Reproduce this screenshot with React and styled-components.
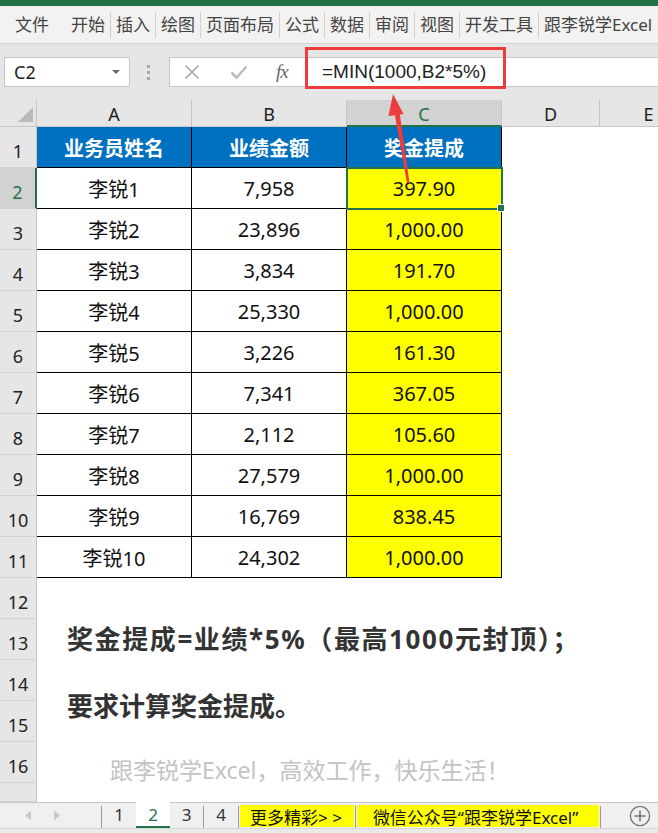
import React from 'react';
import styled, { createGlobalStyle, css } from 'styled-components';

const GREEN = '#217346';
const RED = '#ef3b3b';
const FONT = '"Noto Sans", "Noto Sans CJK SC", sans-serif';

const GlobalStyle = createGlobalStyle`
  html, body { margin: 0; padding: 0; background: #fff; }
  body { font-family: ${FONT}; }
  * { box-sizing: border-box; }
`;

const Window = styled.div`
  position: relative;
  width: 658px;
  height: 833px;
  overflow: hidden;
  display: flex;
  flex-direction: column;
  background: #fff;
`;

const TitleStrip = styled.div`
  flex: none;
  height: 6px;
  background: ${GREEN};
`;

const Ribbon = styled.nav`
  flex: none;
  height: 38px;
  display: flex;
  align-items: center;
  padding-left: 10px;
  background: #f3f2f1;
  border-bottom: 1px solid #d4d4d4;
`;

const RibbonTab = styled.span`
  padding: 0 5px;
  margin-right: ${(p) => p.$gap || 0}px;
  font-size: 17px;
  line-height: 24px;
  color: #444;
  white-space: nowrap;
`;

const RibbonSep = styled.span`
  flex: none;
  width: 1px;
  height: 26px;
  background: #d0d0d0;
`;

const FormulaBand = styled.div`
  flex: none;
  height: 56px;
  display: flex;
  align-items: flex-start;
  padding: 13px 0 0 4px;
  background: #e6e6e6;
`;

const NameBox = styled.div`
  flex: none;
  width: 126px;
  height: 30px;
  display: flex;
  align-items: center;
  justify-content: space-between;
  padding: 0 9px 0 9px;
  background: #fff;
  border: 1px solid #c6c6c6;
  font-size: 18px;
  color: #222;
`;

const Caret = styled.span`
  width: 0;
  height: 0;
  border-left: 4px solid transparent;
  border-right: 4px solid transparent;
  border-top: 4px solid #6a6a6a;
`;

const Grip = styled.div`
  flex: none;
  width: 39px;
  height: 30px;
  display: flex;
  flex-direction: column;
  align-items: center;
  justify-content: center;
  gap: 3px;
  padding-right: 2px;
`;

const GripDot = styled.span`
  width: 3px;
  height: 3px;
  background: #a8a8a8;
`;

const FormulaField = styled.div`
  flex: 1;
  height: 30px;
  display: flex;
  background: #fff;
  border: 1px solid #c6c6c6;
  border-right: none;
`;

const ActionBox = styled.div`
  flex: none;
  width: 136px;
  display: flex;
  align-items: center;
  padding-left: 14px;
  gap: 30px;
  border-right: 1px solid #d4d4d4;
`;

const FxLabel = styled.span`
  font-family: "Liberation Serif", serif;
  font-style: italic;
  font-size: 19px;
  color: #666;
  letter-spacing: -1px;
  margin-left: -2px;
`;

const FormulaText = styled.div`
  position: relative;
  flex: 1;
  display: flex;
  align-items: center;
  padding-left: 16px;
  font-family: "Liberation Sans", Arial, sans-serif;
  font-size: 19px;
  color: #222;
`;

const RedFrame = styled.div`
  position: absolute;
  left: -1px;
  top: -11px;
  width: 201px;
  height: 42px;
  border: 3px solid ${RED};
  pointer-events: none;
`;

const Sheet = styled.div`
  flex: 1;
  min-height: 0;
  overflow: hidden;
  display: grid;
  grid-template-columns: 37px 155px 155px 155px 98px 98px;
  grid-template-rows: 27px repeat(16, 41px) 1fr;
  background: #fff;
`;

const Corner = styled.div`
  position: relative;
  background: #e6e6e6;
  border-right: 1px solid #c6c6c6;
  border-bottom: 1px solid #c6c6c6;
  &::after {
    content: '';
    position: absolute;
    right: 3px;
    bottom: 4px;
    border-style: solid;
    border-width: 0 0 15px 15px;
    border-color: transparent transparent #b9b9b9 transparent;
  }
`;

const ColHeader = styled.div`
  display: flex;
  align-items: center;
  justify-content: center;
  padding-top: 2px;
  font-size: 18px;
  background: ${(p) => (p.$active ? '#d2d2d2' : '#e6e6e6')};
  color: ${(p) => (p.$active ? GREEN : '#222')};
  border-right: 1px solid #c6c6c6;
  border-bottom: ${(p) => (p.$active ? `2px solid ${GREEN}` : '1px solid #c6c6c6')};
`;

const RowHeader = styled.div`
  display: flex;
  align-items: flex-end;
  justify-content: center;
  padding-bottom: 5px;
  font-size: 18px;
  line-height: 22px;
  background: ${(p) => (p.$active ? '#d2d2d2' : '#e6e6e6')};
  color: ${(p) => (p.$active ? GREEN : '#222')};
  border-right: ${(p) => (p.$active ? `2px solid ${GREEN}` : '1px solid #c6c6c6')};
  border-bottom: 1px solid #d2d2d2;
`;

const toneBg = { head: '#0070c0', bonus: '#ffff00', plain: '#fff' };

const Cell = styled.div`
  position: relative;
  display: flex;
  align-items: center;
  justify-content: center;
  white-space: nowrap;
  font-size: 20px;
  background: ${(p) => toneBg[p.$tone]};
  color: ${(p) => (p.$tone === 'head' ? '#fff' : '#111')};
  font-weight: ${(p) => (p.$tone === 'head' ? 700 : 400)};
  border-right: 1px solid #000;
  border-bottom: 1px solid #000;
  ${(p) =>
    p.$selected &&
    css`
      z-index: 2;
      outline: 2px solid ${GREEN};
      outline-offset: -1px;
      &::after {
        content: '';
        position: absolute;
        right: -4px;
        bottom: -4px;
        width: 6px;
        height: 6px;
        background: ${GREEN};
        border: 1px solid #fff;
      }
    `}
`;

const Blank = styled.div`
  grid-column: ${(p) => p.$span || 'auto'};
  background: #fff;
`;

const Note = styled.div`
  grid-column: 2 / span 5;
  display: flex;
  align-items: ${(p) => p.$align};
  padding-left: ${(p) => p.$indent}px;
  white-space: nowrap;
  overflow: visible;
  font-size: ${(p) => p.$size}px;
  font-weight: ${(p) => (p.$muted ? 400 : 700)};
  color: ${(p) => (p.$muted ? '#c3c3c3' : '#333')};
  letter-spacing: ${(p) => p.$track || 0}px;
  line-height: 1.2;
`;

const NoteText = styled.span`
  margin-top: ${(p) => p.$shift || 0}px;
  margin-bottom: ${(p) => p.$drop || 0}px;
`;

const TabBar = styled.div`
  flex: none;
  height: 26px;
  display: flex;
  align-items: stretch;
  background: #f0f0f0;
  border-top: 1px solid #c6c6c6;
`;

const Nav = styled.div`
  flex: none;
  width: 101px;
  display: flex;
  align-items: center;
  padding-left: 24px;
  gap: 21px;
`;

const TabDivider = styled.span`
  flex: none;
  width: 1px;
  margin-top: 3px;
  background: #9a9a9a;
`;

const SheetTab = styled.div`
  flex: none;
  width: ${(p) => p.$w}px;
  display: flex;
  align-items: center;
  justify-content: center;
  font-size: 17px;
  color: ${(p) => (p.$active ? GREEN : '#333')};
  background: ${(p) => (p.$active ? '#fff' : 'transparent')};
  border-bottom: 2px solid ${(p) => (p.$active ? GREEN : 'transparent')};
  margin-top: ${(p) => (p.$active ? '-1px' : '0')};
`;

const PromoTab = styled.div`
  flex: none;
  display: flex;
  align-items: center;
  margin: 2px 1px 1px 1px;
  padding: 0 ${(p) => p.$pad}px 0 ${(p) => p.$padL}px;
  background: #ffff00;
  font-size: 17px;
  color: #111;
  white-space: nowrap;
`;

const Spacer = styled.div`
  flex: 1;
`;

const AddSheet = styled.div`
  flex: none;
  display: flex;
  align-items: center;
  margin-right: 7px;
`;

const BottomStrip = styled.div`
  flex: none;
  height: 5px;
  background: #e9e9e9;
  border-top: 1px solid #d6d6d6;
`;

const Overlay = styled.svg`
  position: absolute;
  left: 0;
  top: 0;
  pointer-events: none;
  z-index: 10;
`;

const ribbonTabs = ['开始', '插入', '绘图', '页面布局', '公式', '数据', '审阅', '视图', '开发工具', '跟李锐学Excel'];

const rows = [
  ['李锐1', '7,958', '397.90'],
  ['李锐2', '23,896', '1,000.00'],
  ['李锐3', '3,834', '191.70'],
  ['李锐4', '25,330', '1,000.00'],
  ['李锐5', '3,226', '161.30'],
  ['李锐6', '7,341', '367.05'],
  ['李锐7', '2,112', '105.60'],
  ['李锐8', '27,579', '1,000.00'],
  ['李锐9', '16,769', '838.45'],
  ['李锐10', '24,302', '1,000.00'],
];

const Tri = ({ dir }) => (
  <svg width="8" height="11" viewBox="0 0 8 11">
    {dir === 'left' ? (
      <polygon points="7,0.5 7,10.5 1,5.5" fill="#c9c9c9" />
    ) : (
      <polygon points="1,0.5 1,10.5 7,5.5" fill="#c9c9c9" />
    )}
  </svg>
);

export default function App() {
  return (
    <Window>
      <GlobalStyle />
      <TitleStrip />
      <Ribbon>
        <RibbonTab $gap={12}>文件</RibbonTab>
        {ribbonTabs.map((t, i) => (
          <React.Fragment key={t}>
            {i > 0 && <RibbonSep />}
            <RibbonTab>{t}</RibbonTab>
          </React.Fragment>
        ))}
      </Ribbon>

      <FormulaBand>
        <NameBox>
          <span>C2</span>
          <Caret />
        </NameBox>
        <Grip>
          <GripDot />
          <GripDot />
          <GripDot />
        </Grip>
        <FormulaField>
          <ActionBox>
            <svg width="16" height="16" viewBox="0 0 16 16">
              <path d="M1.5 1.5 L14.5 14.5 M14.5 1.5 L1.5 14.5" stroke="#a6a6a6" strokeWidth="1.6" fill="none" />
            </svg>
            <svg width="18" height="16" viewBox="0 0 18 16">
              <path d="M1.5 8.5 L6.5 13.5 L16.5 2.5" stroke="#bdbdbd" strokeWidth="2.6" fill="none" />
            </svg>
            <FxLabel>fx</FxLabel>
          </ActionBox>
          <FormulaText>
            =MIN(1000,B2*5%)
            <RedFrame />
          </FormulaText>
        </FormulaField>
      </FormulaBand>

      <Sheet>
        <Corner />
        {['A', 'B', 'C', 'D', 'E'].map((c) => (
          <ColHeader key={c} $active={c === 'C'}>
            {c}
          </ColHeader>
        ))}

        <RowHeader>1</RowHeader>
        <Cell $tone="head">业务员姓名</Cell>
        <Cell $tone="head">业绩金额</Cell>
        <Cell $tone="head">奖金提成</Cell>
        <Blank $span="5 / span 2" />

        {rows.map(([name, amount, bonus], i) => (
          <React.Fragment key={name}>
            <RowHeader $active={i === 0}>{i + 2}</RowHeader>
            <Cell $tone="plain">{name}</Cell>
            <Cell $tone="plain">{amount}</Cell>
            <Cell $tone="bonus" $selected={i === 0}>
              {bonus}
            </Cell>
            <Blank $span="5 / span 2" />
          </React.Fragment>
        ))}

        <RowHeader>12</RowHeader>
        <Blank $span="2 / span 5" />

        <RowHeader>13</RowHeader>
        <Note $align="center" $indent={30} $size={26} $track={1.6}>
          <NoteText>奖金提成=业绩*5%（最高1000元封顶）；</NoteText>
        </Note>

        <RowHeader>14</RowHeader>
        <Blank $span="2 / span 5" />

        <RowHeader>15</RowHeader>
        <Note $align="flex-start" $indent={30} $size={26}>
          <NoteText $shift={-10}>要求计算奖金提成。</NoteText>
        </Note>

        <RowHeader>16</RowHeader>
        <Note $align="flex-end" $indent={73} $size={23} $muted>
          <NoteText $drop={-2}>跟李锐学Excel，高效工作，快乐生活！</NoteText>
        </Note>

        <RowHeader />
        <Blank $span="2 / span 5" />
      </Sheet>

      <TabBar>
        <Nav>
          <Tri dir="left" />
          <Tri dir="right" />
        </Nav>
        <TabDivider />
        <SheetTab $w={34}>1</SheetTab>
        <SheetTab $w={34} $active>
          2
        </SheetTab>
        <SheetTab $w={33}>3</SheetTab>
        <TabDivider />
        <SheetTab $w={34}>4</SheetTab>
        <TabDivider />
        <PromoTab $padL={10} $pad={12}>更多精彩&gt; &gt;</PromoTab>
        <TabDivider />
        <PromoTab $padL={16} $pad={21}>微信公众号“跟李锐学Excel”</PromoTab>
        <TabDivider />
        <Spacer />
        <AddSheet>
          <svg width="22" height="22" viewBox="0 0 22 22">
            <circle cx="11" cy="11" r="9.6" stroke="#7a7a7a" strokeWidth="1.4" fill="none" />
            <path d="M11 5.5 V16.5 M5.5 11 H16.5" stroke="#7a7a7a" strokeWidth="1.6" />
          </svg>
        </AddSheet>
      </TabBar>
      <BottomStrip />

      <Overlay width="658" height="833" viewBox="0 0 658 833">
        <polygon points="407,183 409.5,183 399.5,112 394.5,113" fill={RED} />
        <polygon points="393,94 403.5,114 388.5,116" fill={RED} />
      </Overlay>
    </Window>
  );
}
